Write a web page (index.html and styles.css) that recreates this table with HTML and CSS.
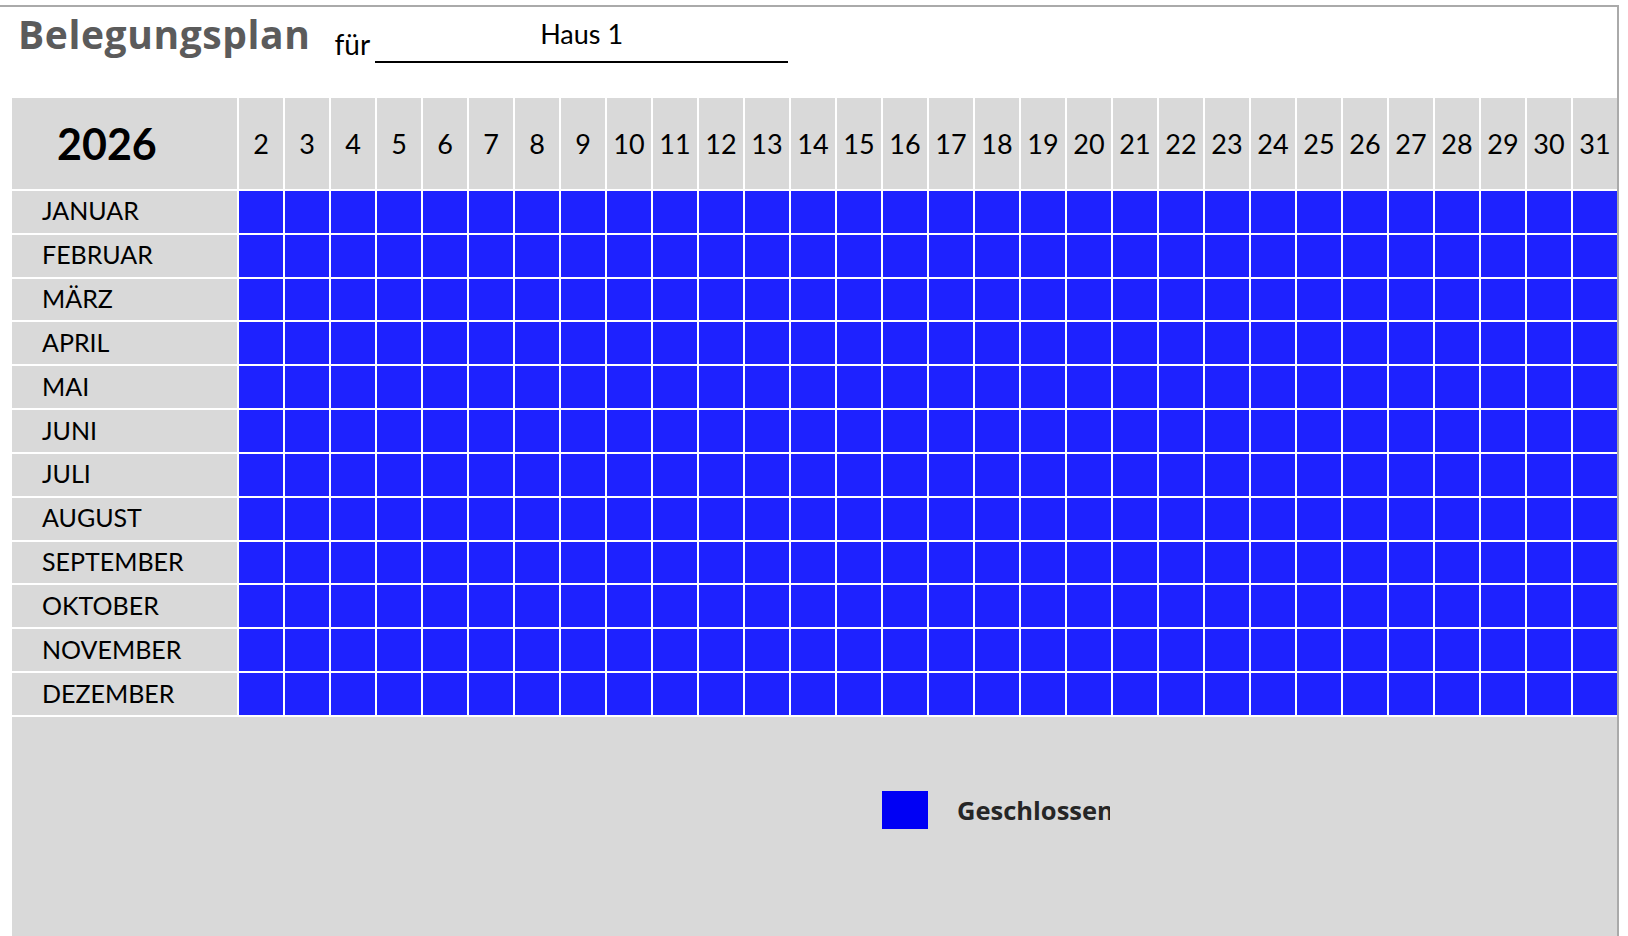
FILE: index.html
```html
<!DOCTYPE html>
<html lang="de">
<head>
<meta charset="utf-8">
<title>Belegungsplan</title>
<link rel="stylesheet" href="styles.css">
</head>
<body>
<div class="frame">
  <div class="head">
    <h1 class="title">Belegungsplan</h1>
    <span class="fuer">für</span>
    <div class="house"><span>Haus 1</span></div>
  </div>
  <div class="plan">
    <div class="year">2026</div>
    <div class="day">2</div><div class="day">3</div><div class="day">4</div><div class="day">5</div><div class="day">6</div><div class="day">7</div><div class="day">8</div><div class="day">9</div><div class="day">10</div><div class="day">11</div><div class="day">12</div><div class="day">13</div><div class="day">14</div><div class="day">15</div><div class="day">16</div><div class="day">17</div><div class="day">18</div><div class="day">19</div><div class="day">20</div><div class="day">21</div><div class="day">22</div><div class="day">23</div><div class="day">24</div><div class="day">25</div><div class="day">26</div><div class="day">27</div><div class="day">28</div><div class="day">29</div><div class="day">30</div><div class="day">31</div>
  </div>
  <div class="bottom">
    <div class="legend">
      <span class="swatch"></span>
      <span class="legend-text">Geschlossen</span>
    </div>
  </div>
</div>
<script>
  (function () {
    var months = ["JANUAR","FEBRUAR","MÄRZ","APRIL","MAI","JUNI","JULI","AUGUST","SEPTEMBER","OKTOBER","NOVEMBER","DEZEMBER"];
    var plan = document.querySelector('.plan');
    months.forEach(function (m) {
      var label = document.createElement('div');
      label.className = 'month';
      label.textContent = m;
      plan.appendChild(label);
      for (var i = 0; i < 30; i++) {
        var c = document.createElement('div');
        c.className = 'cell';
        plan.appendChild(c);
      }
    });
  })();
</script>
</body>
</html>
```
FILE: styles.css
```css
html, body {
  margin: 0;
  padding: 0;
  background: #ffffff;
  overflow: hidden;
}

body {
  font-family: "Lato", "Open Sans", sans-serif;
  color: #000;
}

.frame {
  margin-top: 5px;
  width: 1617px;
  border-top: 2px solid #aaaaaa;
  border-right: 2px solid #aaaaaa;
}

.head {
  height: 91px;
  display: flex;
  align-items: flex-start;
  padding-left: 18px;
}

.title {
  margin: 4px 0 0 0;
  font-family: "Open Sans", sans-serif;
  font-size: 39px;
  line-height: 1.2;
  font-weight: 700;
  color: #5b5b5b;
  letter-spacing: 0.6px;
  height: 47px;
}

.fuer {
  margin: 23px 0 0 24px;
  font-size: 28px;
  line-height: 1;
}

.house {
  margin: 11px 0 0 5px;
  width: 413px;
  height: 43px;
  border-bottom: 2px solid #000;
  display: flex;
  justify-content: center;
  align-items: flex-start;
  font-size: 27px;
  line-height: 1;
}

.house span {
  margin-top: 2px;
}

.plan {
  margin-left: 12px;
  width: 1605px;
  height: 617px;
  display: grid;
  grid-template-columns: 225px repeat(30, 1fr);
  grid-template-rows: 91px repeat(12, 1fr);
  gap: 2px;
}

.year {
  background: #d9d9d9;
  display: flex;
  align-items: center;
  padding-left: 45px;
  font-size: 43px;
  font-weight: 700;
}

.day {
  background: #d9d9d9;
  display: flex;
  align-items: center;
  justify-content: center;
  font-size: 27px;
}

.month {
  background: #d9d9d9;
  display: flex;
  align-items: center;
  padding-left: 30px;
  font-size: 25px;
  padding-bottom: 3px;
}

.cell {
  background: #1e22ff;
}

.bottom {
  margin: 2px 0 0 12px;
  width: 1605px;
  height: 219px;
  background: #d9d9d9;
}

.legend {
  display: flex;
  align-items: center;
  padding: 74px 0 0 870px;
}

.swatch {
  width: 46px;
  height: 38px;
  background: #0000f5;
  flex: none;
}

.legend-text {
  margin-left: 29px;
  width: 153px;
  overflow: hidden;
  white-space: nowrap;
  font-family: "Open Sans", sans-serif;
  font-weight: 700;
  font-size: 25.5px;
  color: #262626;
}
```
